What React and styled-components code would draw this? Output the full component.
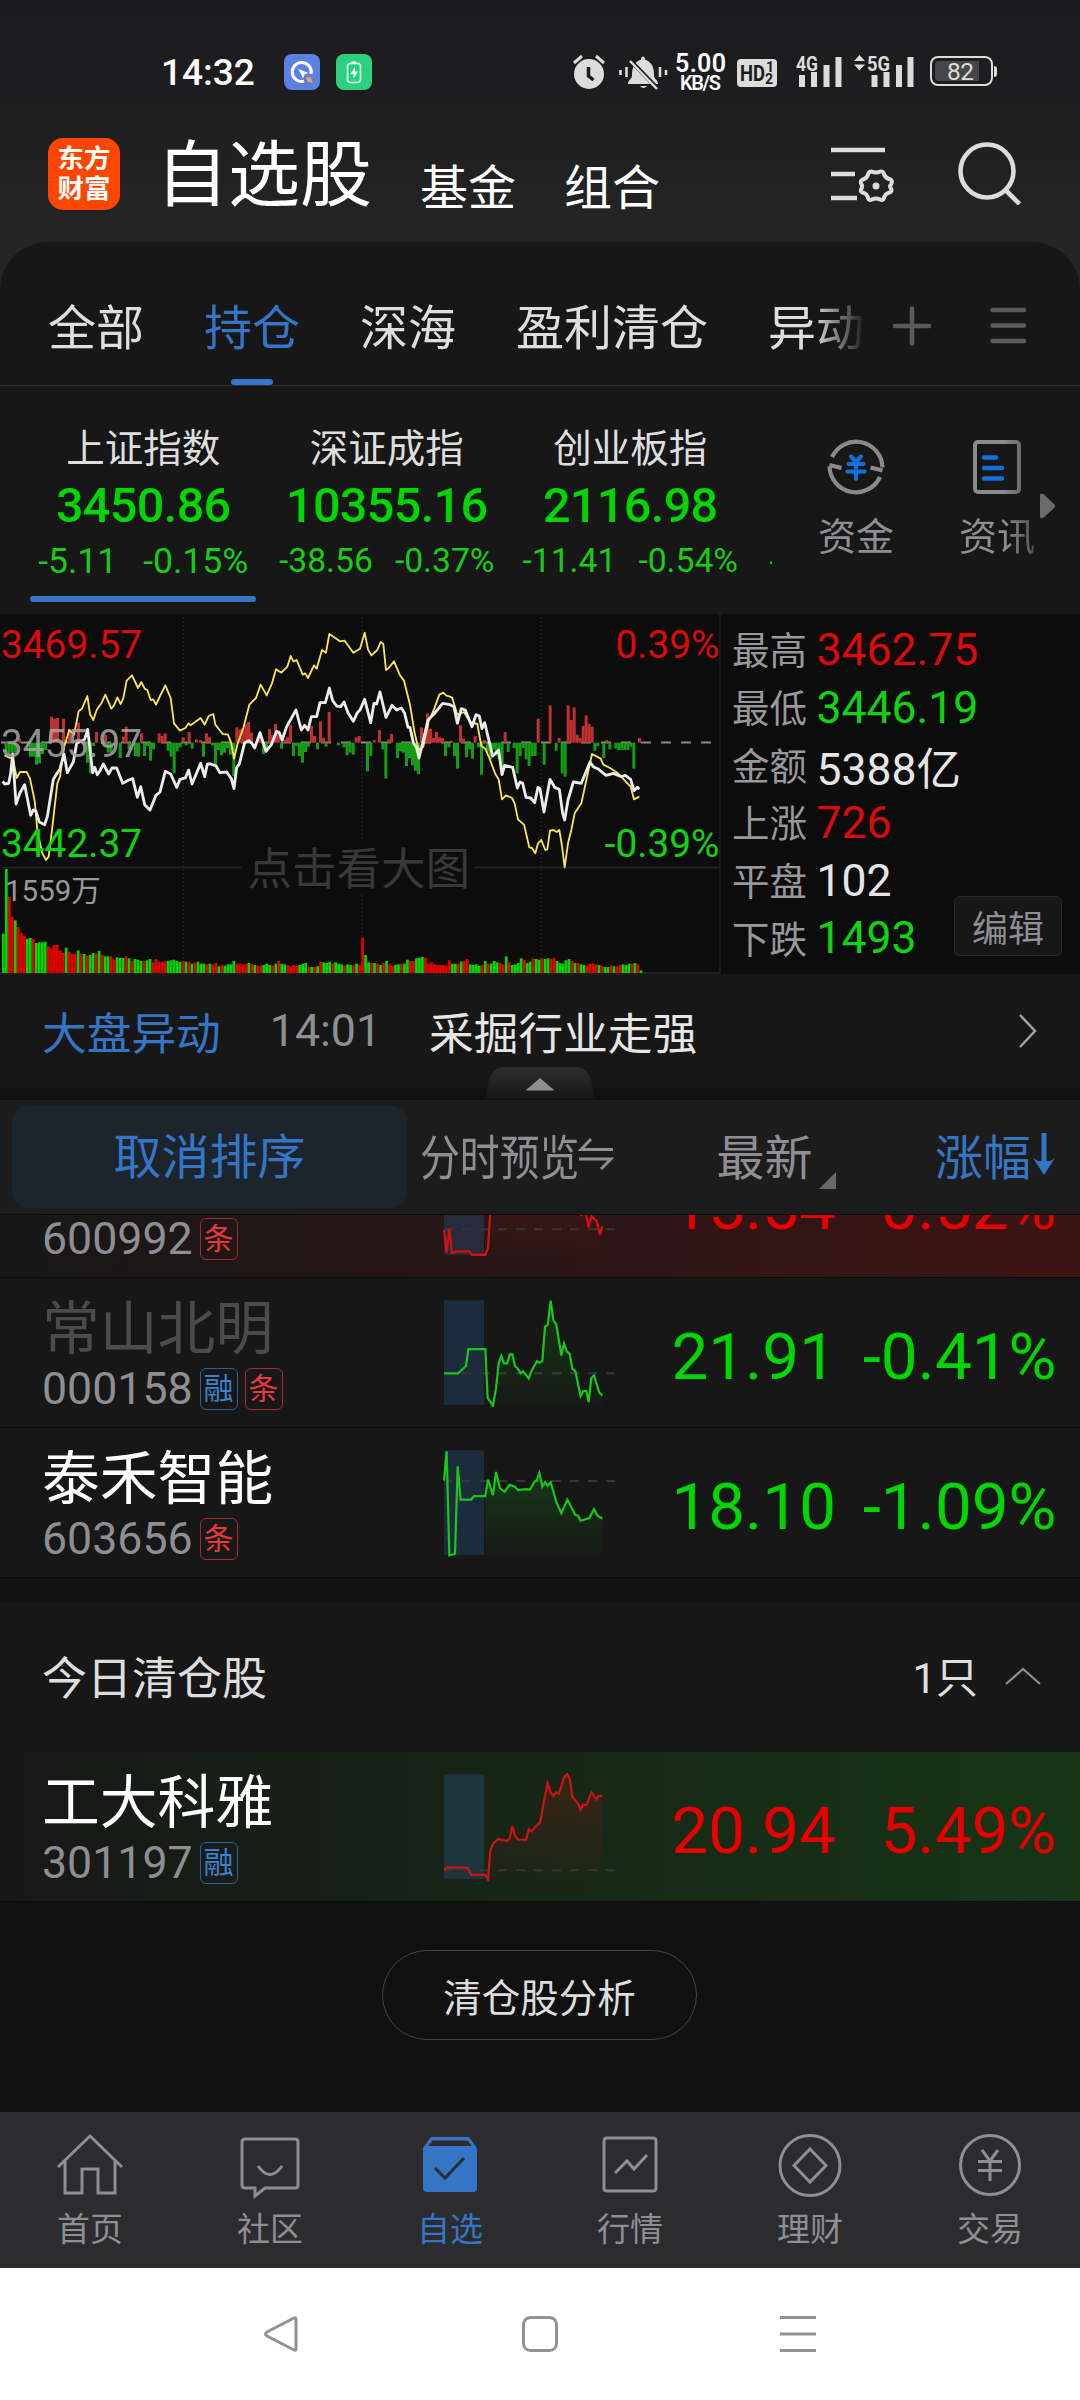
import styled, { createGlobalStyle } from "styled-components";

const RED = "#e60000";
const GREEN = "#00d600";
const BLUE = "#3475c5";
const GRAY = "#8e8e93";
const LIGHT = "#dededf";

const tabs = ["全部", "持仓", "深海", "盈利清仓", "异动"];

const indexes = [
  { name: "上证指数", value: "3450.86", diff: "-5.11", pct: "-0.15%", active: true },
  { name: "深证成指", value: "10355.16", diff: "-38.56", pct: "-0.37%" },
  { name: "创业板指", value: "2116.98", diff: "-11.41", pct: "-0.54%" },
];

const stats = [
  { label: "最高", value: "3462.75", color: "#dc0a0a" },
  { label: "最低", value: "3446.19", color: "#0fd40f" },
  { label: "金额", value: "5388亿", color: "#e6e6e6" },
  { label: "上涨", value: "726", color: "#dc0a0a" },
  { label: "平盘", value: "102", color: "#e6e6e6" },
  { label: "下跌", value: "1493", color: "#0fd40f" },
];

// minute chart, three units per pixel
const indexLine =
  "8,514 14,522 26,520 32,490 38,432 48,582 60,548 74,524 92,616 100,600 108,604 118,636 134,644 142,620 160,508 180,476 192,432 202,488 220,456 230,400 246,392 254,388 263,358 268,400 278,488 284,472 292,494 300,482 310,462 326,492 336,474 350,474 368,520 386,510 398,506 412,562 422,530 434,584 450,600 468,556 480,546 496,484 512,492 530,532 540,508 556,504 566,480 576,522 602,460 614,500 622,462 632,462 648,468 660,488 680,486 694,506 702,536 710,472 718,462 734,398 746,392 756,400 764,414 780,368 798,424 814,404 830,364 838,368 846,390 860,350 888,300 904,360 914,346 924,360 934,320 950,320 960,278 976,278 988,234 998,272 1010,288 1022,290 1032,276 1044,308 1060,334 1072,308 1080,300 1094,268 1112,338 1122,280 1130,282 1140,246 1158,322 1176,286 1190,300 1204,294 1214,310 1224,352 1230,352 1240,398 1250,414 1257,444 1270,390 1284,330 1302,312 1328,280 1350,284 1362,290 1372,340 1384,296 1396,300 1416,350 1428,314 1438,318 1446,356 1454,338 1464,380 1478,438 1496,420 1506,494 1514,466 1538,472 1552,534 1560,516 1568,520 1578,562 1592,564 1604,578 1614,532 1620,536 1632,606 1650,508 1664,532 1678,538 1688,610 1694,630 1704,570 1720,516 1744,520 1770,456 1780,470 1796,478 1818,496 1840,490 1864,500 1876,496 1892,508 1902,542 1912,532 1918,538";

const averageLine =
  "14,436 30,444 38,440 50,504 60,486 80,486 90,506 104,572 112,660 126,728 138,750 146,740 156,660 172,520 180,500 192,412 208,360 222,374 236,304 246,296 262,258 270,312 280,330 290,300 304,280 316,254 334,296 342,286 352,262 362,282 370,264 380,212 396,196 414,234 424,216 434,236 442,240 452,270 460,268 468,284 480,258 496,226 512,264 522,340 540,362 556,354 566,340 572,346 602,324 614,344 626,318 640,312 646,344 668,372 684,374 694,400 702,446 712,404 730,354 748,284 768,264 782,224 800,256 816,220 828,178 844,188 862,170 872,138 880,154 890,150 908,194 916,190 924,204 942,166 950,176 966,120 978,128 988,72 1000,80 1020,94 1034,92 1060,128 1080,116 1094,68 1104,118 1114,136 1132,120 1142,96 1150,102 1158,180 1166,174 1182,154 1200,196 1212,212 1230,284 1244,370 1256,420 1270,410 1286,334 1302,298 1318,254 1330,248 1338,256 1356,262 1372,314 1392,306 1410,336 1432,342 1444,408 1456,416 1468,444 1486,492 1496,508 1506,568 1518,556 1536,564 1544,580 1554,628 1572,644 1588,712 1596,714 1606,730 1614,700 1624,690 1636,720 1642,718 1650,662 1660,660 1670,666 1678,660 1686,708 1694,772 1704,700 1714,660 1724,610 1744,580 1776,432 1802,446 1810,464 1830,474 1852,488 1892,530 1902,568 1918,560";

const pressure =
  "14:-28 23:-36 32:-30 41:-30 54:12 87:-42 96:-42 105:-66 114:-62 123:-34 132:-22 150:78 159:72 168:74 186:72 204:40 231:60 258:-60 267:-92 276:-10 285:32 312:24 320:-30 329:-30 356:-46 366:18 374:48 383:-20 402:-40 411:-42 420:28 429:-40 438:-10 447:-54 456:-20 473:28 482:20 491:28 500:-24 509:-42 518:-92 527:-26 536:-14 545:16 554:-8 563:32 572:-18 585:10 597:8 606:-42 615:28 624:16 633:-8 642:-72 651:-22 660:-38 669:-30 678:-16 687:-36 697:-100 706:46 715:40 724:44 733:56 741:62 750:30 768:10 777:28 786:-34 795:-16 804:40 813:22 822:56 831:36 840:-18 849:10 858:16 867:54 876:-40 885:-10 894:-40 903:-60 912:-28 921:-12 930:50 939:20 948:-20 957:64 966:14 974:-12 983:92 1010:-8 1028:-14 1037:-38 1046:-30 1055:-36 1064:16 1073:20 1098:-86 1108:-40 1118:8 1134:38 1144:-20 1153:-108 1162:10 1170:26 1188:-46 1197:-26 1206:-30 1215:-70 1224:-46 1233:-68 1242:-84 1251:-94 1260:46 1269:20 1278:88 1287:42 1296:14 1305:32 1314:16 1323:14 1332:-40 1342:-14 1350:6 1359:-40 1368:-78 1377:52 1386:12 1395:-44 1404:-20 1413:-48 1421:20 1431:-14 1440:-96 1449:8 1458:-30 1467:-50 1476:-20 1484:-40 1493:-50 1502:-96 1511:32 1520:-28 1538:-16 1547:-92 1556:-40 1565:-16 1574:-50 1583:-70 1592:-40 1601:-40 1610:72 1628:-66 1646:112 1664:-24 1673:14 1682:-92 1691:-102 1700:112 1709:68 1718:106 1727:24 1736:14 1745:50 1754:82 1763:56 1772:48 1780:-24 1789:-10 1807:-46 1816:8 1825:-20 1843:-18 1852:-22 1861:-22 1870:-22 1879:-22 1888:-12 1897:-78 1914:14"
    .split(" ")
    .map((item) => item.split(":").map(Number));

const volumes =
  "g118 g312 r228 r168 g158 r138 r120 r112 g103 g105 r103 g90 g92 g92 g94 r80 r74 r84 r84 r68 r60 g76 r64 r58 r57 g68 r58 g57 r52 g54 g60 r58 g66 r54 g50 g50 r50 r40 g47 g45 g45 r50 g44 r37 g42 g40 g36 r36 g38 g42 r32 r42 r34 r34 r34 g36 g38 g40 g36 g34 r36 g34 r34 g28 r32 g34 g28 g28 r26 g28 r26 r30 g20 r24 g22 g26 g26 g36 r28 r28 r26 r26 g30 r28 g24 r22 r22 g24 g28 g24 r22 g28 r36 g28 g26 r24 r20 r24 r22 g24 g28 g30 r18 g18 r18 g20 r34 g32 g30 g34 r28 g32 g28 g26 r22 g26 g24 r24 g28 r24 r106 g54 g32 r30 g30 r28 g24 r30 g36 r26 r22 g24 g26 r28 g28 g40 r36 r36 g44 g46 g48 r46 r28 r32 r26 r24 r24 r24 r22 r38 g28 g28 r28 g34 r36 r42 g26 g24 g26 g22 r24 g36 r28 g28 g36 g32 r30 r26 g50 r32 g24 g26 g30 g44 r40 g30 g34 r44 g42 g40 r44 g42 g44 r42 r46 g36 g30 g28 g38 g42 r36 g30 r30 g26 g24 r22 r28 r28 r26 g24 r22 g18 g18 r22 g20 r20 r24 g26 g24 g28 r28 g30 r26 g8"
    .split(" ")
    .map((item) => ({ up: item[0] === "r", height: Number(item.slice(1)) }));

const stocks = [
  {
    name: "贵绳股份",
    code: "600992",
    tags: ["条"],
    price: "15.54",
    pct: "0.52%",
    up: true,
    glow: "61, 20, 20",
    base: 183,
    points:
      "0,184 8,236 16,182 24,238 40,234 76,234 84,242 124,242 132,226 139,140 180,90 230,40 300,10 370,70 408,144 412,150 420,146 426,150 434,178 442,152 458,164 468,196 475,176",
  },
  {
    name: "常山北明",
    code: "000158",
    tags: ["融", "条"],
    price: "21.91",
    pct: "-0.41%",
    dim: true,
    base: 169,
    points:
      "0,169 42,169 66,152 73,113 124,113 131,226 147,244 156,204 164,146 172,129 180,146 190,146 197,125 205,125 213,152 221,158 230,169 237,164 254,181 262,164 279,141 286,145 295,141 303,61 311,57 320,1 328,46 337,56 352,128 360,100 368,118 377,124 385,158 394,164 410,222 418,210 427,210 434,236 442,180 450,174 466,214 475,220",
  },
  {
    name: "泰禾智能",
    code: "603656",
    tags: ["条"],
    price: "18.10",
    pct: "-1.09%",
    base: 71,
    points:
      "0,70 8,2 16,243 33,240 41,37 50,114 82,114 90,106 124,106 132,68 147,104 156,50 168,88 182,96 197,80 213,84 222,92 246,90 258,91 272,72 278,70 286,52 295,84 303,74 311,82 320,74 337,120 352,146 370,114 394,150 402,151 410,163 436,157 450,136 460,151 475,158",
  },
];

const cleared = {
  name: "工大科雅",
  code: "301197",
  tags: ["融"],
  price: "20.94",
  pct: "5.49%",
  up: true,
  glow: "22, 54, 22",
  base: 222,
  points:
    "0,222 8,216 70,216 82,233 124,233 132,244 139,176 148,160 162,150 190,154 197,148 205,120 213,142 222,151 246,152 254,127 262,133 278,118 288,112 303,50 311,20 320,42 328,50 336,42 345,44 360,8 369,-1 377,10 385,52 402,68 410,82 418,70 427,72 442,42 458,58 464,50 475,50",
};

const StatusIcons = () => (
  <svg width="440" height="50" viewBox="565 47 440 50" fill="#dcdcdc">
    <circle cx="589" cy="74" r="15" />
    <path d="M574 63l8-7M604 63l-8-7" stroke="#dcdcdc" strokeWidth="3" />
    <path d="M588.500 67v9l5 4" stroke="#1c1c1e" strokeWidth="3.500" fill="none" />
    <path d="M628 84c0-5 4-4 4-9 0-9 3-13 9-15.500 0-4 4-4 4 0 6 2.500 9 6.500 9 15.500 0 5 4 4 4 9zM640 86h7q-3.500 4-7 0" />
    <path d="M628 58l30 31" stroke="#1c1c1e" strokeWidth="4" />
    <path d="M630 61l27 28" stroke="#dcdcdc" strokeWidth="2.500" />
    <path d="M620.500 70v5M626.500 67v10M660 67v10M666 70v5" stroke="#dcdcdc" strokeWidth="2.600" />
    <text x="675" y="72" fontSize="25" fontWeight="600" fill="#fff" textLength="51">5.00</text>
    <text x="680" y="90" fontSize="20" fontWeight="600" fill="#fff" textLength="41">KB/S</text>
    <rect x="737" y="59" width="40" height="28" rx="4" />
    <g fill="#1c1c1e" fontWeight="700">
      <text x="740" y="81" fontSize="22" textLength="25" lengthAdjust="spacingAndGlyphs">HD</text>
      <text x="766" y="72" fontSize="14">1</text>
      <text x="765" y="84" fontSize="14">2</text>
    </g>
    <text x="796" y="71" fontSize="21" fontWeight="700" textLength="22" lengthAdjust="spacingAndGlyphs">4G</text>
    <path d="M799 75h6v12h-6zM811 72h6v15h-6zM823.500 65h6v22h-6zM835.500 57h6v30h-6z" />
    <path d="M854 61l5.500-6 5.500 6zM854 64.500h11l-5.500 6z" />
    <text x="867" y="71" fontSize="21" fontWeight="700" textLength="23" lengthAdjust="spacingAndGlyphs">5G</text>
    <path d="M871.500 75h6v12h-6zM883.500 72h6v15h-6zM896 65h6v22h-6zM907.500 57h6v30h-6z" />
    <rect x="931" y="57" width="61" height="28" rx="7" fill="none" stroke="#dcdcdc" strokeWidth="2" />
    <path d="M939 61h40v20h-40q-4 0-4-4v-12q0-4 4-4z" fill="#464648" />
    <path d="M994 66q3 0 3 3v5q0 3-3 3z" />
    <text x="947" y="80" fontSize="24.500" textLength="27">82</text>
  </svg>
);

const SettingIcon = () => (
  <svg width="66" height="64" viewBox="0 0 66 64" fill="none" stroke="#dcdcdc" strokeWidth="4.600">
    <path d="M0 11h54M0 35h24M0 59h26" />
    <path
      d="M40.500 32.500Q45 34.500 49.500 32.500Q52.500 32 53 35.500Q55 39.500 59.500 40.500Q62 42 60 45.500Q58 47 60 49.500Q61.500 52.500 58.500 53.500Q54 54.500 53 59Q52 62 49 60.500Q45 58.500 41 60.500Q38 62 37 59Q36 54.500 31.500 53.500Q28.500 52 30.500 49.500Q32 47 30 44.500Q29 41.500 32 40.500Q36 39.500 37 35.500Q37.500 32.500 40.500 32.500Z"
      strokeWidth="4"
    />
    <circle cx="45" cy="47" r="3.500" fill="#dcdcdc" stroke="none" />
  </svg>
);

const SearchIcon = () => (
  <svg width="64" height="66" viewBox="0 0 64 66" fill="none" stroke="#dcdcdc" strokeWidth="4.600">
    <circle cx="30" cy="32" r="26.500" />
    <path d="M48.500 51l14 14" />
  </svg>
);

const MinuteChart = () => (
  <svg width="719" height="360" viewBox="0 614 719 360">
    <path d="M183 617v356M362 617v222M362 895v78M541 617v356" stroke="#1c1c1c" strokeWidth="2" strokeDasharray="2 2" />
    <path d="M1 867.500h241M475 867.500h244M0 973h719" stroke="#202020" strokeWidth="2" />
    <text x="247.500" y="885" fontSize="44.500" fill="#383838">点击看大图</text>
    <path d="M1 742.500h718" stroke="#8c8c8c" strokeWidth="2" strokeDasharray="10 10" />
    <g transform="translate(0 610) scale(0.33333)">
      {pressure.map(([x, h]) => (
        <rect key={x} x={x} y={h > 0 ? 398 - h : 398} width="9" height={Math.abs(h)} fill={h > 0 ? "#c03030" : "#149c14"} />
      ))}
      {volumes.map((item, i) => (
        <rect key={i} x={6 + i * 8.98} y={1089 - item.height} width="8.200" height={item.height} fill={item.up ? RED : GREEN} />
      ))}
      <polyline points={averageLine} fill="none" stroke="#fbe550" strokeWidth="5.500" strokeLinejoin="round" />
      <polyline points={indexLine} fill="none" stroke="#ececec" strokeWidth="8.500" strokeLinejoin="round" />
    </g>
    <g fontSize="38.800">
      <text x="1" y="658" fill="#dc0a0a">3469.57</text>
      <text x="1" y="757" fill="#a6a6a6" opacity="0.85">3455.97</text>
      <text x="1" y="857" fill="#0fd40f">3442.37</text>
      <text x="719.500" y="658" fill="#dc0a0a" textAnchor="end">0.39%</text>
      <text x="719.500" y="857" fill="#0fd40f" textAnchor="end">-0.39%</text>
      <text x="5" y="901" fontSize="29.500" fill="#999">1559万</text>
    </g>
  </svg>
);

const Spark = ({ up, points, base }) => {
  const color = up ? "#d21212" : "#18c818";
  const id = `fill-${base}`;
  return (
    <SparkSvg viewBox="-3 -3 522 250" preserveAspectRatio="none">
      <defs>
        <linearGradient id={id} x1="0" y1="0" x2="0" y2="1">
          <stop offset="0" stopColor={color} stopOpacity="0.18" />
          <stop offset="1" stopColor={color} stopOpacity="0.02" />
        </linearGradient>
      </defs>
      <rect width="120" height="242" fill="#2a5d94" opacity="0.300" />
      <path d={`M0 ${base}H513`} stroke="#363636" strokeWidth="2" strokeDasharray="9 9" vectorEffect="non-scaling-stroke" />
      <polygon points={`124,242 ${points.split(" ").filter((p) => parseInt(p) >= 124).join(" ")} 475,242`} fill={`url(#${id})`} />
      <polyline points={points} fill="none" stroke={color} strokeWidth="2.200" vectorEffect="non-scaling-stroke" />
    </SparkSvg>
  );
};

const Stock = ({ stock }) => (
  <StockRow $glow={stock.glow}>
    <StockInfo>
      <StockName $dim={stock.dim}>{stock.name}</StockName>
      <StockCode>
        {stock.code}
        {stock.tags.map((tag) => (
          <Tag key={tag} $red={tag === "条"}>{tag}</Tag>
        ))}
      </StockCode>
    </StockInfo>
    <Spark {...stock} />
    <Price $up={stock.up}>{stock.price}</Price>
    <Percent $up={stock.up}>{stock.pct}</Percent>
  </StockRow>
);

const navItems = [
  {
    label: "首页",
    icon: <path d="M3 37L35 6l32 31M10 31v32h17V39h16v24h17V31" />,
  },
  {
    label: "社区",
    icon: <path d="M10 9h50q3 0 3 3v43q0 3-3 3H30l-10 8V58H10q-3 0-3-3V12q0-3 3-3zM23 36q12 17 24 0" />,
  },
  {
    label: "自选",
    active: true,
    icon: (
      <>
        <path d="M16 7h38l8 11v40q0 4-4 4H12q-4 0-4-4V18z" fill={BLUE} stroke="none" />
        <path d="M17.500 10.500h35l4.500 5.500H13z" fill="#2c2c2e" stroke="none" />
        <path d="M20 38l10 10 19-20" stroke="#2c2c2e" />
      </>
    ),
  },
  {
    label: "行情",
    icon: <path d="M12 8h46q3 0 3 3v47q0 3-3 3H12q-3 0-3-3V11q0-3 3-3zM20 43l12-12 7 8 13-14" />,
  },
  {
    label: "理财",
    icon: (
      <>
        <circle cx="35" cy="35.500" r="30" />
        <path d="M35 19l16 16.500-16 16.500-16-16.500z" />
      </>
    ),
  },
  {
    label: "交易",
    icon: (
      <>
        <circle cx="35" cy="35" r="29.500" />
        <path d="M27 20l8 11 8-11M23 31.500h24M23 40.500h24M35 31v20" />
      </>
    ),
  },
];

export default function App() {
  return (
    <Screen>
      <GlobalStyle />
      <Header>
        <StatusBar>
          <Clock>14:32</Clock>
          <svg width="36" height="36" viewBox="0 0 36 36">
            <rect width="36" height="36" rx="8" fill="#5b80e2" />
            <path d="M20 27.200A9.500 9.500 0 1 1 27 20" stroke="#fff" strokeWidth="3" fill="none" />
            <path d="M14.500 15l10 4-4 1.500-1.500 4z" fill="#fff" />
            <path d="M22 23l5 0.500 1.500 5.500-5-1.500z" fill="#e9a84c" />
          </svg>
          <svg width="36" height="36" viewBox="0 0 36 36">
            <rect width="36" height="36" rx="8" fill="#2bd081" />
            <rect x="11.500" y="9.500" width="13" height="19" rx="3" fill="none" stroke="#e4fff2" strokeWidth="1.600" />
            <path d="M15.500 7.500h5v2h-5zM19 13l-4.500 7h3v4.500l4.500-7h-3z" fill="#fff" />
          </svg>
          <StatusRight>
            <StatusIcons />
          </StatusRight>
        </StatusBar>
        <TitleBar>
          <Logo>
            <span>东方</span>
            <span>财富</span>
          </Logo>
          <Title $size={72}>自选股</Title>
          <Title $size={48}>基金</Title>
          <Title $size={48}>组合</Title>
          <HeaderActions>
            <SettingIcon />
            <SearchIcon />
          </HeaderActions>
        </TitleBar>
      </Header>

      <Panel>
        <Tabs>
          <TabList>
            {tabs.map((tab) => (
              <Tab key={tab} $active={tab === "持仓"}>{tab}</Tab>
            ))}
          </TabList>
          <svg width="168" height="44" viewBox="0 0 168 44" stroke="#5c5c5e" strokeWidth="4.500" strokeLinecap="round">
            <path d="M31 22h34M48 4.500v35M128.500 6h31.500M128.500 21.500h31.500M128.500 37h31.500" />
          </svg>
        </Tabs>

        <IndexBar>
          <IndexList>
            {indexes.map((item) => (
              <IndexCard key={item.name}>
                <IndexName>{item.name}</IndexName>
                <IndexValue>{item.value}</IndexValue>
                <IndexChange $wide={item.active}>
                  <span>{item.diff}</span>
                  <span>{item.pct}</span>
                </IndexChange>
                <IndexLine $active={item.active} />
              </IndexCard>
            ))}
            <NextCard>-</NextCard>
          </IndexList>
          <Shortcuts>
            <Shortcut>
              <svg width="64" height="64" viewBox="0 0 64 64" fill="none" stroke="#8a8a8c" strokeWidth="4.200">
                <path d="M8 22a26.500 26.500 0 0 1 50.500 10.500M58.500 35.500l-12-3M56 42a26.500 26.500 0 0 1-50.500-10.500M5.500 30l12 3" />
                <path d="M27 21.500l5 5.500 5-5.500M24.500 29h15M23.500 36.500h17M32 28v16" stroke="#1070dc" strokeLinecap="round" />
              </svg>
              资金
            </Shortcut>
            <Shortcut $fade>
              <svg width="64" height="64" viewBox="0 0 64 64" fill="none" stroke="#8a8a8c" strokeWidth="4">
                <rect x="10" y="7" width="44" height="50" rx="3" />
                <path d="M19 22.500h12M19 33h18M19 43.500h18" stroke="#1070dc" strokeWidth="4.500" strokeLinecap="round" />
              </svg>
              资讯
            </Shortcut>
          </Shortcuts>
          <MoreArrow width="16" height="26" viewBox="0 0 16 26">
            <path d="M0 3q0-4 4-1.500l10 9.500q2 2 0 4l-10 9.500q-4 2-4-1.500z" fill="#6b6b6d" />
          </MoreArrow>
        </IndexBar>

        <Market>
          <MinuteChart />
          <Stats>
            {stats.map((item) => (
              <Stat key={item.label}>
                <StatLabel>{item.label}</StatLabel>
                <StatValue $color={item.color}>{item.value}</StatValue>
              </Stat>
            ))}
            <EditButton>编辑</EditButton>
          </Stats>
        </Market>

        <News>
          <NewsType>大盘异动</NewsType>
          <NewsTime>14:01</NewsTime>
          <NewsTitle>采掘行业走强</NewsTitle>
          <svg width="20" height="36" viewBox="0 0 20 36" fill="none" stroke="#a2a2a4" strokeWidth="2.500">
            <path d="M2 2l15 16-15 16" />
          </svg>
          <Collapse width="112" height="32" viewBox="0 0 112 32">
            <defs>
              <linearGradient id="collapse" x1="0" y1="0" x2="0" y2="1">
                <stop offset="0" stopColor="#2f2f2f" />
                <stop offset="1" stopColor="#151515" />
              </linearGradient>
            </defs>
            <path d="M1 32L5 13Q8 0 22 0h68q14 0 17 13l4 19z" fill="url(#collapse)" />
            <path d="M56 11l14.500 12.500h-29z" fill="#8e8e8e" />
          </Collapse>
        </News>
      </Panel>

      <SortBar>
        <SortReset>取消排序</SortReset>
        <Preview>
          <span>分时预览</span>
          <svg width="36" height="34" viewBox="0 0 36 34" fill="none" stroke={GRAY} strokeWidth="3">
            <path d="M13 2L3 12.500h32M1 22h32L23 32" />
          </svg>
        </Preview>
        <Latest>
          最新
          <svg width="17" height="17" viewBox="0 0 17 17">
            <path d="M17 0v17H0z" fill="#68686a" />
          </svg>
        </Latest>
        <Change>
          涨幅
          <svg width="26" height="44" viewBox="0 0 26 44" fill={BLUE}>
            <path d="M10.500 1h5v31h-5z" />
            <path d="M2 26q3 2 5 3h12q3-1 5-3L13 43z" />
          </svg>
        </Change>
      </SortBar>

      <StockList>
        {stocks.map((stock) => (
          <Stock key={stock.code} stock={stock} />
        ))}
      </StockList>

      <SectionHead>
        <span>今日清仓股</span>
        <Count>1只</Count>
        <svg width="36" height="18" viewBox="0 0 36 18" fill="none" stroke={GRAY} strokeWidth="2.200">
          <path d="M1 17L18 2l17 15" />
        </svg>
      </SectionHead>
      <Stock stock={cleared} />

      <Footer>
        <AnalyzeButton>清仓股分析</AnalyzeButton>
      </Footer>

      <BottomNav>
        {navItems.map((item) => (
          <NavItem key={item.label} $active={item.active}>
            <svg width="70" height="70" viewBox="0 0 70 70" fill="none" stroke={GRAY} strokeWidth="3">
              {item.icon}
            </svg>
            {item.label}
          </NavItem>
        ))}
      </BottomNav>

      <SystemBar>
        <svg width="40" height="40" viewBox="0 0 40 40">
          <path d="M34 5v30q0 2-2 1L5 22q-3-2 0-4L32 4q2-1 2 1z" />
        </svg>
        <svg width="40" height="40" viewBox="0 0 40 40">
          <rect x="3.500" y="3.500" width="33" height="33" rx="7" />
        </svg>
        <svg width="40" height="40" viewBox="0 0 40 40">
          <path d="M2 3.500h36M2 20h36M2 36.500h36" />
        </svg>
      </SystemBar>
    </Screen>
  );
}

const GlobalStyle = createGlobalStyle`
  * {
    box-sizing: border-box;
  }

  body {
    margin: 0;
    background: #111;
  }

  svg {
    display: block;
    flex-shrink: 0;
  }
`;

const Screen = styled.div`
  display: flex;
  flex-direction: column;
  width: 1080px;
  height: 2400px;
  overflow: hidden;

  background: #111;
  color: ${LIGHT};
  font-family: Roboto, "Noto Sans CJK SC", sans-serif;
  white-space: nowrap;
`;

const Header = styled.header`
  height: 290px;
  margin-bottom: -48px;
  flex-shrink: 0;

  background: linear-gradient(#1c1c1e 0, #1d1d1f 90px, #252525 240px);
`;

const StatusBar = styled.div`
  display: flex;
  align-items: center;
  gap: 16px;

  height: 126px;
  padding: 18px 75px 0 161px;
`;

const Clock = styled.div`
  width: 107px;

  color: #fff;
  font-size: 37px;
  font-weight: 500;
`;

const StatusRight = styled.div`
  margin-left: auto;
`;

const TitleBar = styled.div`
  display: flex;
  align-items: flex-end;
  gap: 48px;

  height: 90px;
  padding: 0 57px 0 48px;
`;

const Logo = styled.div`
  display: flex;
  flex-direction: column;
  align-items: center;
  justify-content: center;

  width: 72px;
  height: 72px;
  margin: 0 -12px 6px 0;

  border-radius: 15px;
  background: #ff4600;

  color: #fff;
  font-size: 26.500px;
  font-weight: 700;
  line-height: 30px;
`;

const Title = styled.div`
  color: #fff;
  font-size: ${(props) => props.$size}px;
  line-height: ${(props) => (props.$size > 50 ? 80 : 54)}px;
`;

const HeaderActions = styled.div`
  display: flex;
  gap: 60px;

  margin: 0 2px 11px auto;
`;

const Panel = styled.section`
  height: 858px;
  flex-shrink: 0;

  border-radius: 48px 48px 0 0;
  background: #171717;
`;

const Tabs = styled.nav`
  display: flex;
  align-items: center;

  height: 144px;
  padding: 25px 48px 0 48px;

  border-bottom: 1px solid #2f2f2f;
`;

const TabList = styled.div`
  display: flex;
  gap: 60px;

  width: 816px;
  overflow: hidden;

  mask-image: linear-gradient(to right, #000 765px, transparent 818px);
`;

const Tab = styled.div`
  display: flex;
  flex-direction: column;
  align-items: center;

  height: 118px;
  padding-top: 31px;

  color: ${(props) => (props.$active ? BLUE : LIGHT)};
  font-size: 48px;
  line-height: 62px;

  &::after {
    content: "";
    width: 42px;
    height: 6px;
    margin-top: auto;

    border-radius: 3px;
    background: ${(props) => (props.$active ? BLUE : "transparent")};
  }
`;

const IndexBar = styled.div`
  display: flex;
  align-items: center;

  height: 228px;
  padding-right: 24px;
`;

const IndexList = styled.div`
  display: flex;
  gap: 17px;

  width: 774px;
  height: 228px;
  padding: 40px 0 0 30px;
  overflow: hidden;
`;

const IndexCard = styled.div`
  display: flex;
  flex-direction: column;
  align-items: center;

  width: 226.500px;
  flex-shrink: 0;
`;

const IndexName = styled.div`
  font-size: 38.500px;
  line-height: 46px;
`;

const IndexValue = styled.div`
  margin: 4px 0 5px;

  color: ${GREEN};
  font-size: 48.500px;
  font-weight: 500;
  letter-spacing: -0.600px;
  line-height: 60px;
`;

const IndexChange = styled.div`
  display: flex;
  gap: ${(props) => (props.$wide ? 26 : 22)}px;

  color: #18cc18;
  font-size: ${(props) => (props.$wide ? 35.5 : 33.7)}px;
  line-height: 40px;
`;

const IndexLine = styled.div`
  width: 226px;
  height: 6px;
  margin-top: 15px;

  border-radius: 3px;
  background: ${(props) => (props.$active ? BLUE : "transparent")};
`;

const NextCard = styled.div`
  padding: 115px 0 0 9px;

  color: ${GREEN};
  font-size: 34px;
  line-height: 40px;
`;

const Shortcuts = styled.div`
  display: flex;
  gap: 65px;

  margin-left: 46px;
`;

const Shortcut = styled.div`
  display: flex;
  flex-direction: column;
  align-items: center;
  gap: 14px;

  width: 76px;
  height: 141px;
  padding-top: 5px;

  color: ${GRAY};
  font-size: 38px;
  line-height: 48px;

  mask-image: ${(props) => (props.$fade ? "linear-gradient(to right, #000 45px, rgba(0, 0, 0, 0.5) 76px)" : "none")};

  & + & {
    margin-right: 5px;
  }
`;

const MoreArrow = styled.svg`
  margin-top: 12px;
`;

const Market = styled.div`
  display: flex;

  height: 360px;

  background: #0c0c0c;
`;

const Stats = styled.div`
  position: relative;

  flex: 1;
  padding: 7px 0 0 11px;

  border-left: 2px solid #1a1a1a;
`;

const Stat = styled.div`
  display: flex;
  align-items: center;
  gap: 9.500px;

  height: 57.700px;
`;

const StatLabel = styled.div`
  padding-bottom: 4px;

  color: #98989a;
  font-size: 37.500px;
`;

const StatValue = styled.div`
  color: ${(props) => props.$color};
  font-size: 44.500px;
`;

const EditButton = styled.button`
  position: absolute;
  right: 18px;
  bottom: 18px;

  width: 108px;
  height: 60px;
  padding: 0;

  border: 1px solid #2a2a2c;
  border-radius: 6px;
  background: #171717;

  color: ${GRAY};
  font-family: inherit;
  font-size: 36px;
`;

const News = styled.div`
  position: relative;

  display: flex;
  align-items: center;

  height: 126px;
  padding: 0 42px 1px 42px;

  border-bottom: 12px solid #111;

  font-size: 44.700px;
`;

const NewsType = styled.div`
  color: ${BLUE};
`;

const NewsTime = styled.div`
  margin: 0 48px 0 49px;

  color: ${GRAY};
`;

const NewsTitle = styled.div`
  flex: 1;

  color: #e6e6e6;
`;

const Collapse = styled.svg`
  position: absolute;
  left: 484px;
  bottom: -11px;
`;

const SortBar = styled.div`
  display: flex;
  align-items: center;

  height: 115px;
  padding: 0 23px 0 12px;
  flex-shrink: 0;

  border-bottom: 1px solid #0c0c0c;
  background: #1c1c1c;

  color: ${GRAY};
  font-size: 48px;
`;

const SortReset = styled.div`
  width: 396px;
  height: 102px;

  border-radius: 16px;
  background: #1c242c;

  color: ${BLUE};
  line-height: 103px;
  text-align: center;
`;

const Preview = styled.div`
  display: flex;
  align-items: center;

  width: 310px;
  padding: 0 0 6px 13px;

  & > span {
    width: 158px;

    transform: scaleX(0.83);
    transform-origin: left;
  }
`;

const Latest = styled.div`
  display: flex;
  align-items: flex-end;
  gap: 7px;

  width: 219px;
  padding-bottom: 7px;
`;

const Change = styled.div`
  display: flex;
  align-items: center;

  padding-bottom: 6px;

  color: ${BLUE};
`;

// the first row is scrolled half under the sort bar
const StockList = styled.div`
  display: flex;
  flex-direction: column;
  justify-content: flex-end;

  height: 363px;
  overflow: hidden;
  flex-shrink: 0;
`;

const StockRow = styled.div`
  display: grid;
  grid-template-columns: 401px 174px 1fr 220px;
  align-items: center;

  height: 150px;
  padding: 0 24px 0 42px;
  flex-shrink: 0;

  border-bottom: 1px solid #0c0c0c;
  background: ${(props) => (props.$glow ? `linear-gradient(to right, #171717, rgb(${props.$glow}))` : "#171717")};
`;

const StockInfo = styled.div`
  padding-top: 0;
`;

const StockName = styled.div`
  color: ${(props) => (props.$dim ? "#4b4b4b" : "#fff")};
  font-size: 57.800px;
  line-height: 72px;
`;

const StockCode = styled.div`
  display: flex;
  align-items: center;
  gap: 7px;

  height: 48px;

  color: ${GRAY};
  font-size: 44.700px;
`;

const Tag = styled.span`
  width: 38px;
  height: 42px;

  border: 1.500px solid ${(props) => (props.$red ? "#a02c2c" : "#2f5f96")};
  border-radius: 6px;

  color: ${(props) => (props.$red ? "#e83a3a" : "#4080cc")};
  font-size: 30px;
  line-height: 39px;
  text-align: center;
  text-indent: -0.500px;
`;

const SparkSvg = styled.svg`
  width: 174px;
  height: 108px;
`;

const Price = styled.div`
  padding: 8px 0 0;

  color: ${(props) => (props.$up ? RED : GREEN)};
  font-size: 65.500px;
  text-align: right;
`;

const Percent = styled(Price)`
  margin-right: -0.500px;
`;

const SectionHead = styled.div`
  display: flex;
  align-items: center;

  height: 174px;
  padding: 0 39px 3px 42px;
  flex-shrink: 0;

  border-top: 24px solid #111;
  background: #171717;

  font-size: 45px;
`;

const Count = styled.div`
  margin: 0 27px 2px auto;

  font-size: 42px;
`;

const Footer = styled.div`
  display: flex;
  justify-content: center;

  height: 210px;
  padding: 48px 1px 0 0;
  flex-shrink: 0;
`;

const AnalyzeButton = styled.button`
  width: 315px;
  height: 90px;

  border: 1px solid #454545;
  border-radius: 45px;
  background: none;

  color: ${LIGHT};
  font-family: inherit;
  font-size: 38.500px;
`;

const BottomNav = styled.nav`
  display: flex;

  height: 156px;
  flex-shrink: 0;

  background: #2c2c2e;
`;

const NavItem = styled.div`
  display: flex;
  flex-direction: column;
  align-items: center;

  width: 180px;
  padding-top: 18px;

  color: ${(props) => (props.$active ? BLUE : GRAY)};
  font-size: 33px;
  line-height: 60px;
`;

const SystemBar = styled.div`
  display: flex;
  align-items: center;
  justify-content: center;
  gap: 218px;

  height: 132px;
  flex-shrink: 0;

  background: #fff;

  & svg {
    fill: none;
    stroke: #929292;
    stroke-width: 3px;
  }
`;
